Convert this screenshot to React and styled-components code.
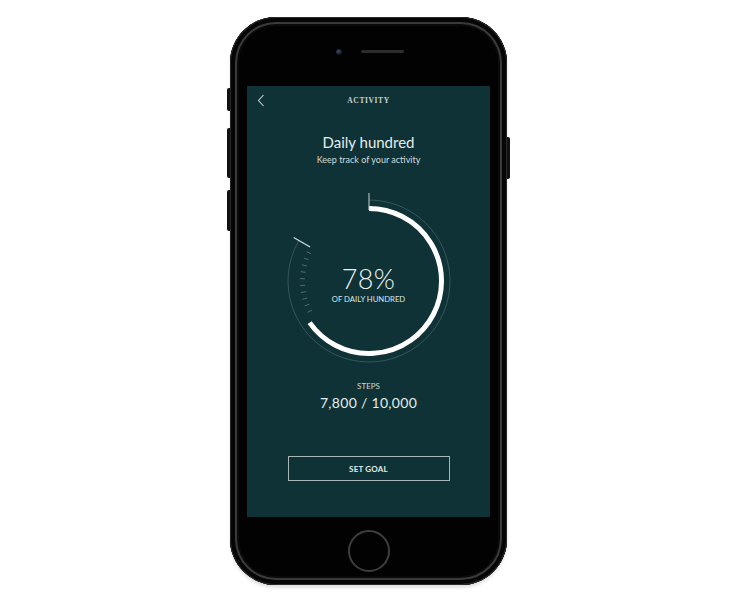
import React from "react";
import styled, { createGlobalStyle } from "styled-components";

const GlobalStyle = createGlobalStyle`
  html, body {
    margin: 0;
    padding: 0;
    background: #fff;
    font-family: "Lato", "Open Sans", sans-serif;
  }
`;

const Page = styled.div`
  width: 737px;
  height: 604px;
  display: flex;
  justify-content: center;
  padding-top: 17px;
  box-sizing: border-box;
`;

const Phone = styled.div`
  position: relative;
  width: 277px;
  height: 568px;
  border-radius: 46px;
  background: #020202;
  box-shadow:
    inset 0 0 0 1px #2a2a2a,
    inset 0 0 0 5px #050505,
    inset 0 0 0 7px #3a3a3a,
    inset 0 0 0 9px #0a0a0a,
    0 3px 3px rgba(0, 0, 0, 0.12);
  display: flex;
  flex-direction: column;
  align-items: center;
`;

const SideButton = styled.div`
  position: absolute;
  top: ${(p) => p.$top}px;
  height: ${(p) => p.$h}px;
  width: 3px;
  background: #111;
  ${(p) => (p.$right ? "right: -3px; border-radius: 0 2px 2px 0;" : "left: -3px; border-radius: 2px 0 0 2px;")}
`;

const TopBezel = styled.div`
  height: 69px;
  width: 100%;
  display: flex;
  align-items: center;
  justify-content: center;
  gap: 19px;
  padding-left: 2px;
  box-sizing: border-box;
`;

const Camera = styled.div`
  width: 6px;
  height: 6px;
  border-radius: 50%;
  background: radial-gradient(circle at 40% 40%, #3b4f7a, #111 70%);
`;

const Speaker = styled.div`
  width: 43px;
  height: 3px;
  border-radius: 2px;
  background: #2c2c2c;
`;

const Screen = styled.div`
  width: 243px;
  height: 431px;
  background: #0e3236;
  display: flex;
  flex-direction: column;
  align-items: center;
  color: #dde5e5;
`;

const Header = styled.div`
  width: 100%;
  height: 28px;
  display: flex;
  align-items: center;
  justify-content: center;
  position: relative;
`;

const BackIcon = styled.svg`
  position: absolute;
  left: 10px;
  top: 8px;
`;

const HeaderTitle = styled.div`
  font-family: "Liberation Serif", "DejaVu Serif", serif;
  font-weight: 700;
  font-size: 7.5px;
  letter-spacing: 0.6px;
  color: #c9d3d3;
`;

const Title = styled.div`
  margin-top: 19px;
  font-size: 15px;
  line-height: 18px;
  color: #e6ecec;
`;

const Subtitle = styled.div`
  margin-top: 3px;
  font-size: 9px;
  line-height: 12px;
  color: #d3dcdc;
`;

const Gauge = styled.div`
  margin-top: 25px;
  width: 180px;
  height: 180px;
  position: relative;
`;

const GaugeLabel = styled.div`
  position: absolute;
  inset: 0;
  display: flex;
  flex-direction: column;
  align-items: center;
  justify-content: center;
  padding-top: 6px;
  box-sizing: border-box;
`;

const Percent = styled.div`
  font-size: 27px;
  font-weight: 300;
  line-height: 28px;
  letter-spacing: 0.3px;
  color: #eef2f2;
`;

const PercentCaption = styled.div`
  font-size: 7.7px;
  line-height: 10px;
  color: #dfe6e6;
  margin-top: 1px;
`;

const StepsLabel = styled.div`
  margin-top: 10px;
  font-size: 8px;
  line-height: 10px;
  color: #cfd8d8;
`;

const StepsValue = styled.div`
  margin-top: 3px;
  font-size: 14px;
  line-height: 17px;
  letter-spacing: 0.3px;
  color: #e6ecec;
`;

const GoalButton = styled.button`
  margin-top: 45px;
  width: 162px;
  height: 25px;
  background: transparent;
  border: 1px solid #a9b6b7;
  color: #e6ecec;
  font-family: "Lato", sans-serif;
  font-size: 8px;
  font-weight: 700;
  letter-spacing: 0.2px;
  padding: 0;
`;

const BottomBezel = styled.div`
  flex: 1;
  display: flex;
  align-items: center;
  justify-content: center;
`;

const HomeButton = styled.div`
  width: 38px;
  height: 38px;
  border-radius: 50%;
  border: 2px solid #3e3e3e;
`;

const C = 90;
const pt = (a, r) => {
  const rad = (a * Math.PI) / 180;
  return [C + r * Math.sin(rad), C - r * Math.cos(rad)];
};
const arc = (r, a0, a1) => {
  const [x0, y0] = pt(a0, r);
  const [x1, y1] = pt(a1, r);
  const large = a1 - a0 > 180 ? 1 : 0;
  return `M${x0} ${y0} A${r} ${r} 0 ${large} 1 ${x1} ${y1}`;
};

function Ring() {
  const ticks = [];
  for (let a = 243; a <= 296; a += 5.8) ticks.push(a);
  const [tx0, ty0] = pt(300, 68);
  const [tx1, ty1] = pt(300, 87);
  return (
    <svg width="180" height="180" viewBox="0 0 180 180">
      <path d={arc(81, 0, 300)} fill="none" stroke="rgba(200,215,215,0.28)" strokeWidth="0.8" />
      <path d={arc(72.5, 0, 235)} fill="none" stroke="#ffffff" strokeWidth="5" />
      <line x1={C} y1="2" x2={C} y2="19" stroke="#c8d2d2" strokeWidth="1" />
      <line x1={tx0} y1={ty0} x2={tx1} y2={ty1} stroke="#d5dddd" strokeWidth="1.2" />
      {ticks.map((a) => {
        const [x0, y0] = pt(a, 64);
        const [x1, y1] = pt(a, 69);
        return <line key={a} x1={x0} y1={y0} x2={x1} y2={y1} stroke="rgba(200,215,215,0.35)" strokeWidth="1" />;
      })}
    </svg>
  );
}

export default function App() {
  return (
    <>
      <GlobalStyle />
      <Page>
        <Phone>
          <SideButton $top={71} $h={23} />
          <SideButton $top={111} $h={50} />
          <SideButton $top={173} $h={41} />
          <SideButton $right $top={120} $h={42} />
          <TopBezel>
            <Camera />
            <Speaker />
          </TopBezel>
          <Screen>
            <Header>
              <BackIcon width="8" height="13" viewBox="0 0 8 13">
                <polyline points="6.5,1 1.5,6.5 6.5,12" fill="none" stroke="#c9d3d3" strokeWidth="1.1" />
              </BackIcon>
              <HeaderTitle>ACTIVITY</HeaderTitle>
            </Header>
            <Title>Daily hundred</Title>
            <Subtitle>Keep track of your activity</Subtitle>
            <Gauge>
              <Ring />
              <GaugeLabel>
                <Percent>78%</Percent>
                <PercentCaption>OF DAILY HUNDRED</PercentCaption>
              </GaugeLabel>
            </Gauge>
            <StepsLabel>STEPS</StepsLabel>
            <StepsValue>7,800 / 10,000</StepsValue>
            <GoalButton>SET GOAL</GoalButton>
          </Screen>
          <BottomBezel>
            <HomeButton />
          </BottomBezel>
        </Phone>
      </Page>
    </>
  );
}
